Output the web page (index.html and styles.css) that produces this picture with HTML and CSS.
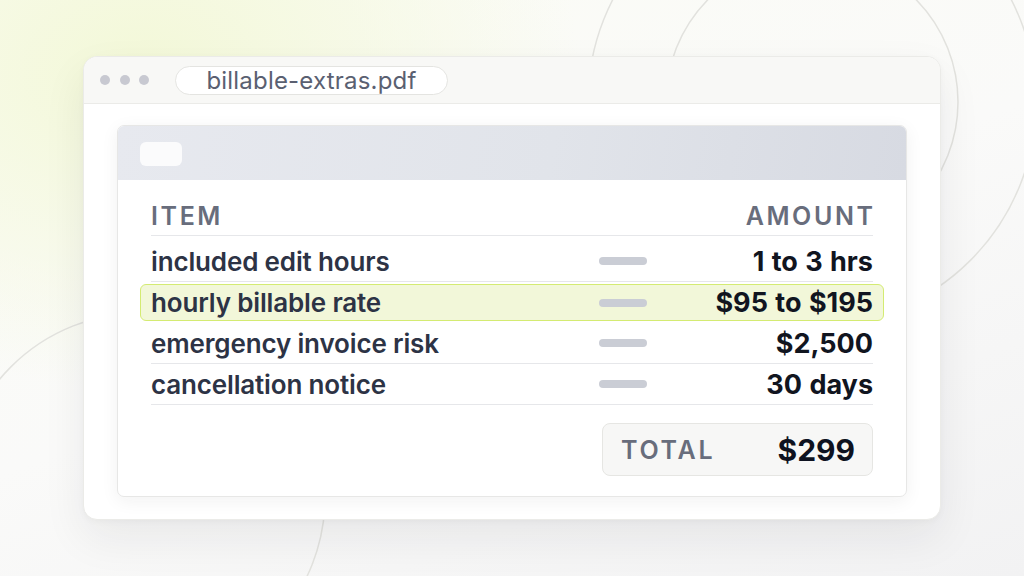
FILE: index.html
```html
<!DOCTYPE html>
<html lang="en">
<head>
<meta charset="utf-8">
<title>billable-extras.pdf</title>
<link rel="stylesheet" href="styles.css">
</head>
<body>
<svg class="backdrop" width="1024" height="576" viewBox="0 0 1024 576" aria-hidden="true">
  <circle cx="812" cy="102" r="146" />
  <circle cx="812" cy="102" r="224" />
  <circle cx="141" cy="497" r="184" />
</svg>
<main class="window">
  <header class="titlebar">
    <div class="dots"><span></span><span></span><span></span></div>
    <div class="url">billable-extras.pdf</div>
  </header>
  <section class="viewer">
    <article class="doc">
      <div class="doc-head"><span class="chip"></span></div>
      <div class="doc-body">
        <div class="thead">
          <span>ITEM</span>
          <span>AMOUNT</span>
        </div>
        <div class="row">
          <span class="label">included edit hours</span>
          <span class="bar"></span>
          <span class="amount">1 to 3 hrs</span>
        </div>
        <div class="row row-hl">
          <span class="label">hourly billable rate</span>
          <span class="bar"></span>
          <span class="amount">$95 to $195</span>
        </div>
        <div class="row">
          <span class="label">emergency invoice risk</span>
          <span class="bar"></span>
          <span class="amount">$2,500</span>
        </div>
        <div class="row">
          <span class="label">cancellation notice</span>
          <span class="bar"></span>
          <span class="amount">30 days</span>
        </div>
        <div class="total-wrap">
          <div class="total">
            <span class="total-label">TOTAL</span>
            <span class="total-value">$299</span>
          </div>
        </div>
      </div>
    </article>
  </section>
</main>
</body>
</html>
```

FILE: styles.css
```css
* { box-sizing: border-box; }

html, body {
  margin: 0;
  padding: 0;
}

body {
  width: 1024px;
  height: 576px;
  overflow: hidden;
  position: relative;
  display: flex;
  align-items: center;
  justify-content: center;
  font-family: "Inter", "Noto Sans", sans-serif;
  background:
    radial-gradient(ellipse 440px 320px at 140px 70px, #f3f8d8 0%, rgba(245, 249, 224, 0.75) 45%, rgba(250, 251, 244, 0) 100%),
    linear-gradient(160deg, #fbfcf5 0%, #fafaf9 50%, #f2f2f3 100%);
}

.backdrop {
  position: absolute;
  left: 0;
  top: 0;
  z-index: 0;
}

.backdrop circle {
  fill: none;
  stroke: #e2e2de;
  stroke-width: 1.5;
}

.window {
  position: relative;
  z-index: 1;
  width: 858px;
  height: 464px;
  background: #ffffff;
  border: 1px solid #ebebe8;
  border-radius: 14px;
  box-shadow: 0 18px 44px rgba(30, 30, 40, 0.07), 0 2px 6px rgba(30, 30, 40, 0.03);
  display: flex;
  flex-direction: column;
  overflow: hidden;
}

.titlebar {
  height: 47px;
  flex: none;
  background: #f8f8f6;
  border-bottom: 1px solid #ebebe8;
  display: flex;
  align-items: center;
  padding-left: 16px;
}

.dots {
  display: flex;
  gap: 9.5px;
}

.dots span {
  width: 10px;
  height: 10px;
  border-radius: 50%;
  background: #c8c9d1;
}

.url {
  margin-left: 26px;
  width: 273px;
  height: 29px;
  border: 1px solid #e4e4e1;
  border-radius: 15px;
  background: #ffffff;
  display: flex;
  align-items: center;
  justify-content: center;
  font-size: 24px;
  color: #5a6071;
  letter-spacing: 0.2px;
}

.viewer {
  flex: 1;
  padding: 21px 33px 22px;
  display: flex;
}

.doc {
  flex: 1;
  background: #ffffff;
  border: 1px solid #e7e7e6;
  border-radius: 7px;
  box-shadow: 0 4px 18px rgba(30, 30, 40, 0.06);
  overflow: hidden;
  display: flex;
  flex-direction: column;
}

.doc-head {
  height: 54px;
  flex: none;
  background: linear-gradient(100deg, #e7e9ef 0%, #e1e4ea 55%, #d7dae2 100%);
  padding: 16px 22px;
}

.chip {
  display: block;
  width: 42px;
  height: 24px;
  border-radius: 6px;
  background: #fbfbfc;
}

.doc-body {
  padding: 20px 33px 0;
}

.thead {
  display: flex;
  justify-content: space-between;
  height: 36px;
  align-items: center;
  border-bottom: 1.5px solid #e6e7ea;
  font-size: 25px;
  font-weight: 600;
  letter-spacing: 2.6px;
  color: #686d7c;
  padding-bottom: 3px;
}

.thead span:last-child {
  margin-right: -2.6px;
}

.row {
  display: grid;
  grid-template-columns: 448px 48px 1fr;
  align-items: center;
  height: 41px;
  border-bottom: 1.5px solid #e6e7ea;
}

.row:nth-child(2) {
  margin-top: 5px;
}

.row-hl {
  height: 37px;
  margin: 2px -11px 2px;
  padding: 0 10px;
  border: 1px solid #d4eb72;
  border-radius: 6px;
  background: #f2f7d9;
}

.label {
  font-size: 26px;
  font-weight: 600;
  color: #2d3345;
  letter-spacing: -0.15px;
}

.bar {
  height: 8px;
  border-radius: 4px;
  background: #cacdd5;
}

.amount {
  text-align: right;
  font-size: 27px;
  font-weight: 700;
  color: #11151f;
  word-spacing: 1px;
}

.total-wrap {
  display: flex;
  justify-content: flex-end;
  padding-top: 18px;
}

.total {
  width: 271px;
  height: 53px;
  background: #f7f7f6;
  border: 1px solid #e6e6e3;
  border-radius: 8px;
  display: flex;
  align-items: center;
  justify-content: space-between;
  padding: 0 17px 0 18px;
}

.total-label {
  font-size: 25px;
  font-weight: 600;
  letter-spacing: 2.7px;
  color: #686d7c;
}

.total-value {
  font-size: 30px;
  font-weight: 700;
  color: #0e1220;
}
```
